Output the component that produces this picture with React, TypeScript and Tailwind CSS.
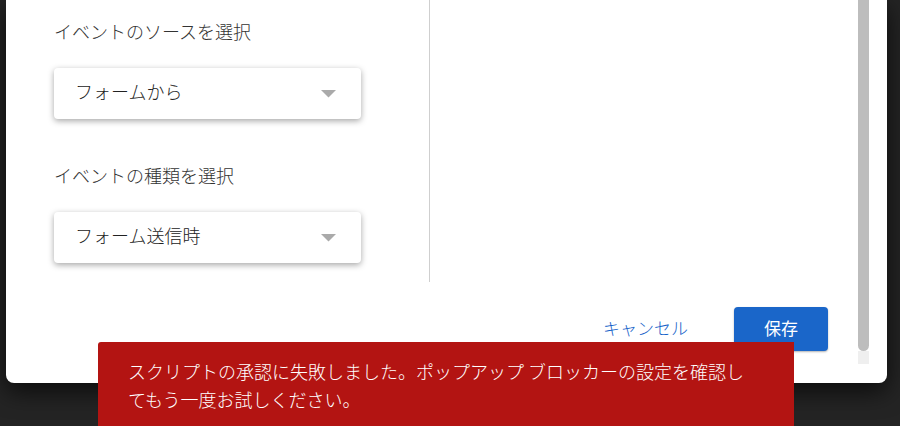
import React from "react";

const font = { fontFamily: '"Noto Sans CJK JP", "Noto Sans", sans-serif' };

const Select: React.FC<{ value: string }> = ({ value }) => (
  <div className="w-[307px] h-[51px] bg-white rounded-[4px] shadow-[0_2px_6px_rgba(0,0,0,0.35)] flex items-center justify-between pl-[21px] pr-[25px]">
    <span className="mb-[5px] text-[18px] leading-[26px] font-light text-[#222]">
      {value}
    </span>
    <svg width="15" height="8" viewBox="0 0 15 8">
      <path d="M0 0 L15 0 L7.5 7.5 Z" fill="#aaaaaa" />
    </svg>
  </div>
);

const App: React.FC = () => {
  return (
    <div
      className="relative w-full h-[426px] overflow-hidden bg-[#242424]"
      style={font}
    >
      <div className="ml-[6px] mr-[13px] h-[383px] bg-white rounded-b-[8px] shadow-[0_8px_24px_rgba(0,0,0,0.7)] flex">
        <div className="flex-1 flex flex-col">
          <div className="h-[282px] flex">
            <div className="w-[424px] border-r border-[#cfcfcf] pl-[48px] pt-[18px] flex flex-col">
              <label className="text-[18px] leading-[26px] font-light text-[#333]">
                イベントのソースを選択
              </label>
              <div className="mt-[24px]">
                <Select value="フォームから" />
              </div>
              <label className="mt-[43px] text-[18px] leading-[26px] font-light text-[#333]">
                イベントの種類を選択
              </label>
              <div className="mt-[24px]">
                <Select value="フォーム送信時" />
              </div>
            </div>
            <div className="flex-1" />
          </div>
          <div className="flex justify-end items-center gap-[30px] pt-[25px] pr-[30px]">
            <button className="h-[44px] px-4 pb-[2px] text-[17px] font-light text-[#1562c9]">
              キャンセル
            </button>
            <button className="w-[94px] h-[44px] pb-[2px] rounded-[4px] bg-[#1a66c9] text-white text-[17px] shadow-[0_1px_2px_rgba(0,0,0,0.3)]">
              保存
            </button>
          </div>
        </div>
        <div className="w-[11px] mr-[18px] flex flex-col">
          <div className="h-[351px] bg-[#bdbdbd] rounded-b-[6px]" />
          <div className="h-[13px] bg-[#efefef]" />
        </div>
      </div>

      <div className="absolute left-[98px] top-[342px] w-[696px] h-[120px] bg-[#b31412] rounded-tl-[3px] pl-[30px] pt-[15px] text-white text-[18px] leading-[28px] font-light">
        スクリプトの承認に失敗しました。ポップアップ ブロッカーの設定を確認し
        <br />
        てもう一度お試しください。
      </div>
    </div>
  );
};

export default App;
